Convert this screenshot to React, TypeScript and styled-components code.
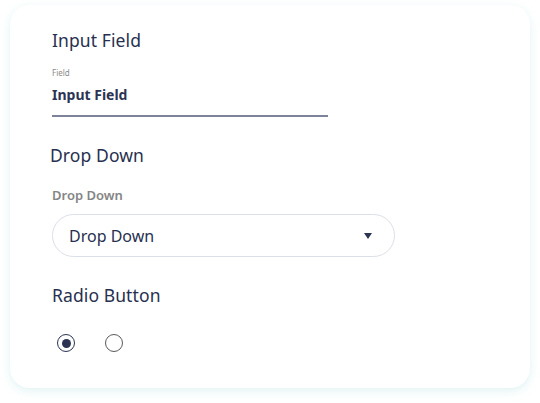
import React from "react";
import styled, { createGlobalStyle } from "styled-components";

const GlobalStyle = createGlobalStyle`
  html, body {
    margin: 0;
    padding: 0;
    background: #ffffff;
    font-family: "Noto Sans", "Open Sans", sans-serif;
  }
`;

const Page = styled.div`
  width: 540px;
  height: 403px;
  padding: 5px 10px 0 10px;
  box-sizing: border-box;
`;

const Card = styled.div`
  height: 383px;
  box-sizing: border-box;
  background: #fff;
  border-radius: 20px;
  box-shadow: 0 3px 10px rgba(170, 220, 220, 0.35);
  padding: 22px 0 0 42px;
  display: flex;
  flex-direction: column;
`;

const Heading = styled.h2<{ $shift?: number }>`
  margin: 0 0 0 ${(p) => p.$shift ?? 0}px;
  font-size: 17.5px;
  font-weight: 400;
  line-height: 26px;
  color: #27304f;
  letter-spacing: 0.1px;
`;

const FieldWrap = styled.div`
  width: 276px;
  margin-top: 15px;
  border-bottom: 2px solid #7d8399;
  padding-bottom: 11px;
`;

const TinyLabel = styled.div`
  font-size: 8px;
  line-height: 10px;
  color: #8a8a8a;
`;

const FieldValue = styled.div`
  margin-top: 8px;
  font-size: 14px;
  font-weight: 700;
  line-height: 18px;
  color: #2b3452;
`;

const Section = styled.div<{ $top: number }>`
  margin-top: ${(p) => p.$top}px;
  display: flex;
  flex-direction: column;
`;

const SelectLabel = styled.div`
  margin-top: 18px;
  font-size: 13px;
  font-weight: 600;
  line-height: 18px;
  color: #858585;
`;

const Select = styled.div`
  margin-top: 10px;
  width: 343px;
  height: 43px;
  box-sizing: border-box;
  border: 1px solid #dcdfe8;
  border-radius: 22px;
  display: flex;
  align-items: center;
  justify-content: space-between;
  padding: 0 22px 0 16px;
  font-size: 16px;
  font-weight: 400;
  color: #27304f;
`;

const Caret = styled.span`
  width: 0;
  height: 0;
  border-left: 4px solid transparent;
  border-right: 4px solid transparent;
  border-top: 6px solid #2b3452;
`;

const RadioRow = styled.div`
  margin-top: 26px;
  margin-left: 5px;
  display: flex;
  gap: 30px;
`;

const Radio = styled.span<{ $checked?: boolean }>`
  width: 18px;
  height: 18px;
  box-sizing: border-box;
  border-radius: 50%;
  border: 1.5px solid ${(p) => (p.$checked ? "#2b3452" : "#5a5a5a")};
  display: flex;
  align-items: center;
  justify-content: center;

  &::after {
    content: "";
    width: 9px;
    height: 9px;
    border-radius: 50%;
    background: #2b3452;
    display: ${(p) => (p.$checked ? "block" : "none")};
  }
`;

export default function App() {
  return (
    <>
      <GlobalStyle />
      <Page>
        <Card>
          <Heading>Input Field</Heading>
          <FieldWrap>
            <TinyLabel>Field</TinyLabel>
            <FieldValue>Input Field</FieldValue>
          </FieldWrap>
          <Section $top={25}>
            <Heading $shift={-2}>Drop Down</Heading>
            <SelectLabel>Drop Down</SelectLabel>
            <Select>
              <span>Drop Down</span>
              <Caret />
            </Select>
          </Section>
          <Section $top={25}>
            <Heading>Radio Button</Heading>
            <RadioRow>
              <Radio $checked />
              <Radio />
            </RadioRow>
          </Section>
        </Card>
      </Page>
    </>
  );
}
